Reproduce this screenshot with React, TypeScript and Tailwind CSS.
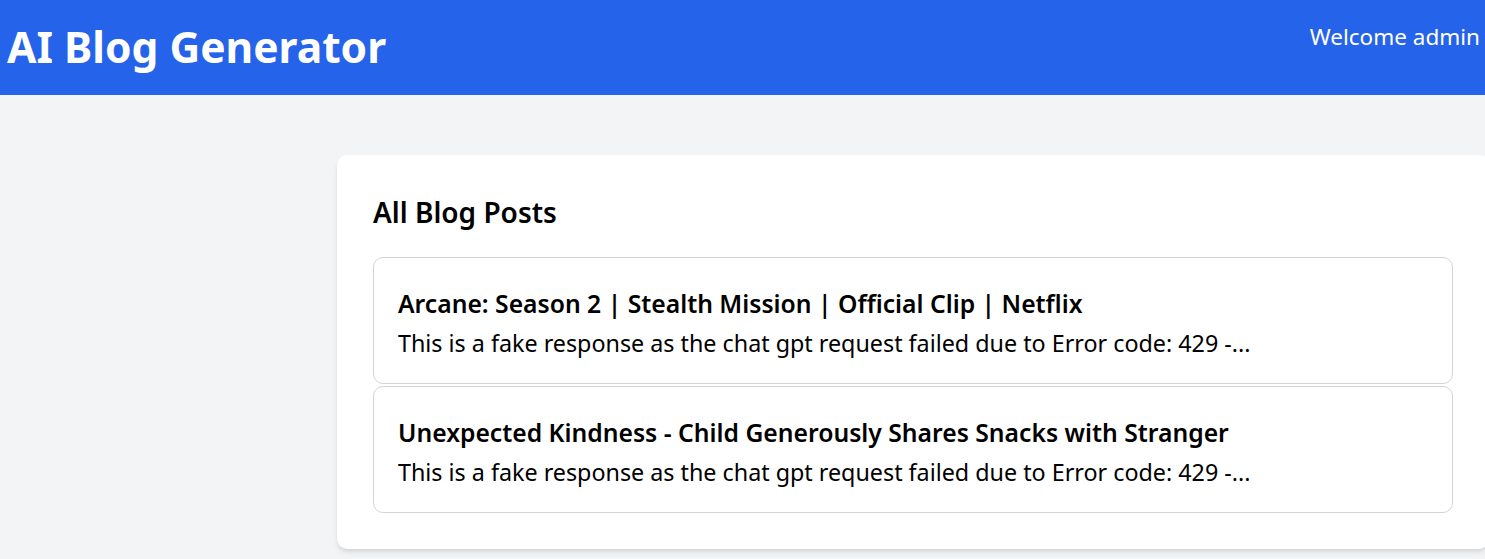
import React from "react";

const posts = [
  {
    title: "Arcane: Season 2 | Stealth Mission | Official Clip | Netflix",
    body: "This is a fake response as the chat gpt request failed due to Error code: 429 -...",
  },
  {
    title: "Unexpected Kindness - Child Generously Shares Snacks with Stranger",
    body: "This is a fake response as the chat gpt request failed due to Error code: 429 -...",
  },
];

export default function App() {
  return (
    <div
      className="min-h-[559px] bg-[#f3f4f6] overflow-hidden"
      style={{ fontFamily: '"Noto Sans", "Open Sans", sans-serif' }}
    >
      <header className="h-[95px] bg-[#2563eb] text-white flex justify-between items-start pl-[7px] pr-[5px]">
        <h1 className="text-[42.5px] font-bold leading-none mt-[26px]">AI Blog Generator</h1>
        <div className="text-[22.5px] leading-none mt-[26px]">Welcome admin</div>
      </header>
      <main className="pt-[60px] pl-[337px]">
        <section className="w-[1152px] bg-white rounded-[10px] shadow-md px-9 pt-[43px] pb-9">
          <h2 className="text-[28px] font-semibold leading-none text-black mb-[31px]">All Blog Posts</h2>
          <div className="flex flex-col gap-[2px]">
            {posts.map((p) => (
              <div key={p.title} className="border border-[#d1d5db] rounded-[10px] px-6 pt-[34px] h-[127px]">
                <h3 className="text-[24.7px] font-semibold leading-none text-black whitespace-nowrap">{p.title}</h3>
                <p className="text-[23.3px] leading-none text-black mt-[15.5px] whitespace-nowrap">{p.body}</p>
              </div>
            ))}
          </div>
        </section>
      </main>
    </div>
  );
}
